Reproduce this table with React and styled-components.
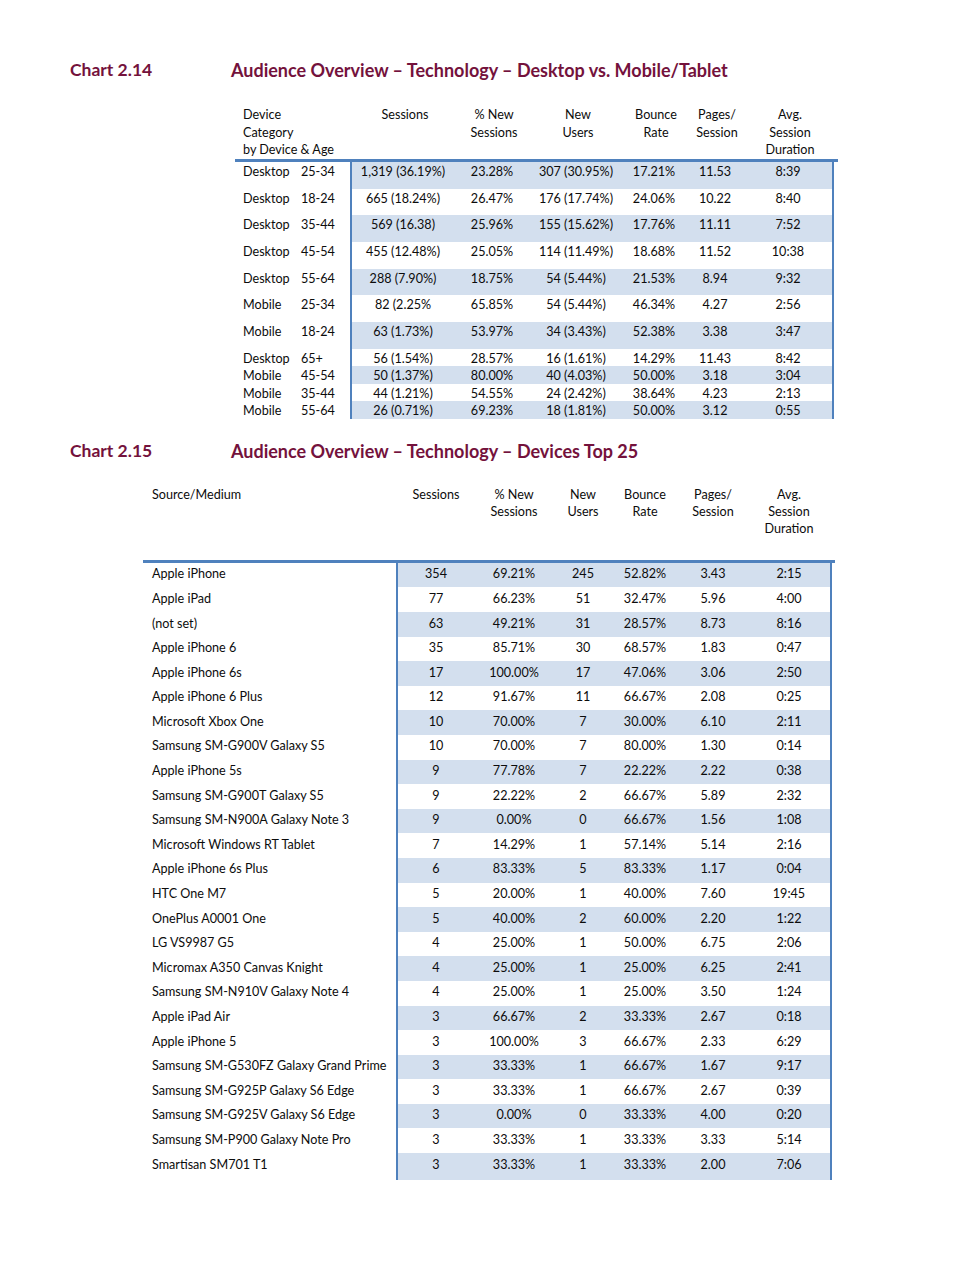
import React from 'react';
import styled, { createGlobalStyle } from 'styled-components';

const GlobalStyle = createGlobalStyle`
  html, body {
    margin: 0;
    padding: 0;
    background: #fff;
  }
  body {
    font-family: Lato, "Open Sans", "Liberation Sans", sans-serif;
    color: #0c0c0c;
  }
`;

const Page = styled.div`
  width: 979px;
  min-height: 1268px;
  padding-top: 58px;
  box-sizing: border-box;
`;

const ChartTitle = styled.div`
  display: flex;
  padding-left: 70px;
  height: 24px;
  line-height: 24px;
  font-size: 18px;
  font-weight: 700;
  color: #74123c;
  margin-top: ${({ $top }) => $top || 0}px;
`;

const ChartNo = styled.div`
  width: 161px;
  font-size: 17.5px;
`;

const Table = styled.div`
  margin-left: ${({ $left }) => $left}px;
  width: ${({ $width }) => $width}px;
  margin-top: ${({ $top }) => $top}px;
  font-size: 12.6px;
`;

const Header = styled.div`
  display: flex;
  height: ${({ $h }) => $h}px;
  line-height: ${({ $lh }) => $lh}px;
  border-bottom: 3px solid #4f81bd;
`;

const Row = styled.div`
  display: flex;
  width: ${({ $width }) => $width}px;
  height: ${({ $h }) => $h}px;
  line-height: ${({ $lh }) => $lh}px;
`;

const Label = styled.div`
  display: flex;
  width: ${({ $w }) => $w}px;
  padding-left: ${({ $pad }) => $pad}px;
  padding-top: ${({ $pt }) => $pt || 0}px;
  box-sizing: border-box;
  white-space: nowrap;
`;

const Device = styled.span`
  width: 58px;
`;

const Data = styled.div`
  flex: 1;
  display: flex;
  padding-top: ${({ $pt }) => $pt || 0}px;
  background: ${({ $band }) => ($band ? '#d3dfee' : '#fff')};
  border-left: 2px solid #4f81bd;
  border-right: 2px solid #4f81bd;
  margin-left: -2px;
`;

const HeadData = styled.div`
  flex: 1;
  display: flex;
`;

const Cell = styled.div`
  width: ${({ $w }) => $w}px;
  flex-shrink: 0;
  text-align: center;
  white-space: nowrap;
`;

const cols1 = [102, 76, 92, 64, 58, 88];
const cols2 = [76, 80, 58, 66, 70, 82];

const heads = [
  ['Sessions'],
  ['% New', 'Sessions'],
  ['New', 'Users'],
  ['Bounce', 'Rate'],
  ['Pages/', 'Session'],
  ['Avg.', 'Session', 'Duration'],
];

const rows1 = [
  ['Desktop', '25-34', '1,319 (36.19%)', '23.28%', '307 (30.95%)', '17.21%', '11.53', '8:39'],
  ['Desktop', '18-24', '665 (18.24%)', '26.47%', '176 (17.74%)', '24.06%', '10.22', '8:40'],
  ['Desktop', '35-44', '569 (16.38)', '25.96%', '155 (15.62%)', '17.76%', '11.11', '7:52'],
  ['Desktop', '45-54', '455 (12.48%)', '25.05%', '114 (11.49%)', '18.68%', '11.52', '10:38'],
  ['Desktop', '55-64', '288 (7.90%)', '18.75%', '54 (5.44%)', '21.53%', '8.94', '9:32'],
  ['Mobile', '25-34', '82 (2.25%', '65.85%', '54 (5.44%)', '46.34%', '4.27', '2:56'],
  ['Mobile', '18-24', '63 (1.73%)', '53.97%', '34 (3.43%)', '52.38%', '3.38', '3:47'],
  ['Desktop', '65+', '56 (1.54%)', '28.57%', '16 (1.61%)', '14.29%', '11.43', '8:42'],
  ['Mobile', '45-54', '50 (1.37%)', '80.00%', '40 (4.03%)', '50.00%', '3.18', '3:04'],
  ['Mobile', '35-44', '44 (1.21%)', '54.55%', '24 (2.42%)', '38.64%', '4.23', '2:13'],
  ['Mobile', '55-64', '26 (0.71%)', '69.23%', '18 (1.81%)', '50.00%', '3.12', '0:55'],
];

const rows2 = [
  ['Apple iPhone', '354', '69.21%', '245', '52.82%', '3.43', '2:15'],
  ['Apple iPad', '77', '66.23%', '51', '32.47%', '5.96', '4:00'],
  ['(not set)', '63', '49.21%', '31', '28.57%', '8.73', '8:16'],
  ['Apple iPhone 6', '35', '85.71%', '30', '68.57%', '1.83', '0:47'],
  ['Apple iPhone 6s', '17', '100.00%', '17', '47.06%', '3.06', '2:50'],
  ['Apple iPhone 6 Plus', '12', '91.67%', '11', '66.67%', '2.08', '0:25'],
  ['Microsoft Xbox One', '10', '70.00%', '7', '30.00%', '6.10', '2:11'],
  ['Samsung SM-G900V Galaxy S5', '10', '70.00%', '7', '80.00%', '1.30', '0:14'],
  ['Apple iPhone 5s', '9', '77.78%', '7', '22.22%', '2.22', '0:38'],
  ['Samsung SM-G900T Galaxy S5', '9', '22.22%', '2', '66.67%', '5.89', '2:32'],
  ['Samsung SM-N900A Galaxy Note 3', '9', '0.00%', '0', '66.67%', '1.56', '1:08'],
  ['Microsoft Windows RT Tablet', '7', '14.29%', '1', '57.14%', '5.14', '2:16'],
  ['Apple iPhone 6s Plus', '6', '83.33%', '5', '83.33%', '1.17', '0:04'],
  ['HTC One M7', '5', '20.00%', '1', '40.00%', '7.60', '19:45'],
  ['OnePlus A0001 One', '5', '40.00%', '2', '60.00%', '2.20', '1:22'],
  ['LG VS9987 G5', '4', '25.00%', '1', '50.00%', '6.75', '2:06'],
  ['Micromax A350 Canvas Knight', '4', '25.00%', '1', '25.00%', '6.25', '2:41'],
  ['Samsung SM-N910V Galaxy Note 4', '4', '25.00%', '1', '25.00%', '3.50', '1:24'],
  ['Apple iPad Air', '3', '66.67%', '2', '33.33%', '2.67', '0:18'],
  ['Apple iPhone 5', '3', '100.00%', '3', '66.67%', '2.33', '6:29'],
  ['Samsung SM-G530FZ Galaxy Grand Prime', '3', '33.33%', '1', '66.67%', '1.67', '9:17'],
  ['Samsung SM-G925P Galaxy S6 Edge', '3', '33.33%', '1', '66.67%', '2.67', '0:39'],
  ['Samsung SM-G925V Galaxy S6 Edge', '3', '0.00%', '0', '33.33%', '4.00', '0:20'],
  ['Samsung SM-P900 Galaxy Note Pro', '3', '33.33%', '1', '33.33%', '3.33', '5:14'],
  ['Smartisan SM701 T1', '3', '33.33%', '1', '33.33%', '2.00', '7:06'],
];

function HeadCells({ cols }) {
  return (
    <HeadData>
      {heads.map((h, i) => (
        <Cell key={i} $w={cols[i]}>
          {h.map((line) => (
            <div key={line}>{line}</div>
          ))}
        </Cell>
      ))}
    </HeadData>
  );
}

export default function App() {
  return (
    <Page>
      <GlobalStyle />
      <ChartTitle>
        <ChartNo>Chart 2.14</ChartNo>
        <div>Audience Overview – Technology – Desktop vs. Mobile/Tablet</div>
      </ChartTitle>

      <Table $left={235} $width={603} $top={24}>
        <Header $h={53} $lh={17.5}>
          <Label $w={119} $pad={8}>
            <div>
              <div>Device</div>
              <div>Category</div>
              <div>by Device &amp; Age</div>
            </div>
          </Label>
          <HeadCells cols={cols1} />
        </Header>
        {rows1.map((r, i) => {
          const tall = i < 7;
          return (
            <Row key={i} $width={599} $h={tall ? 26.7 : 17.5} $lh={17.5}>
              <Label $w={121} $pad={8} $pt={tall ? 1 : 1}>
                <Device>{r[0]}</Device>
                <span>{r[1]}</span>
              </Label>
              <Data $band={i % 2 === 0} $pt={tall ? 1 : 1}>
                {r.slice(2).map((v, j) => (
                  <Cell key={j} $w={cols1[j]}>{v}</Cell>
                ))}
              </Data>
            </Row>
          );
        })}
      </Table>

      <ChartTitle $top={20}>
        <ChartNo>Chart 2.15</ChartNo>
        <div>Audience Overview – Technology – Devices Top 25</div>
      </ChartTitle>

      <Table $left={143} $width={692} $top={23}>
        <Header $h={74} $lh={17}>
          <Label $w={255} $pad={9}>Source/Medium</Label>
          <HeadCells cols={cols2} />
        </Header>
        {rows2.map((r, i) => (
          <Row key={i} $width={689} $h={i === rows2.length - 1 ? 27 : 24.6} $lh={17}>
            <Label $w={257} $pad={9} $pt={2.5}>{r[0]}</Label>
            <Data $band={i % 2 === 0} $pt={2.5}>
              {r.slice(1).map((v, j) => (
                <Cell key={j} $w={cols2[j]}>{v}</Cell>
              ))}
            </Data>
          </Row>
        ))}
      </Table>
    </Page>
  );
}
